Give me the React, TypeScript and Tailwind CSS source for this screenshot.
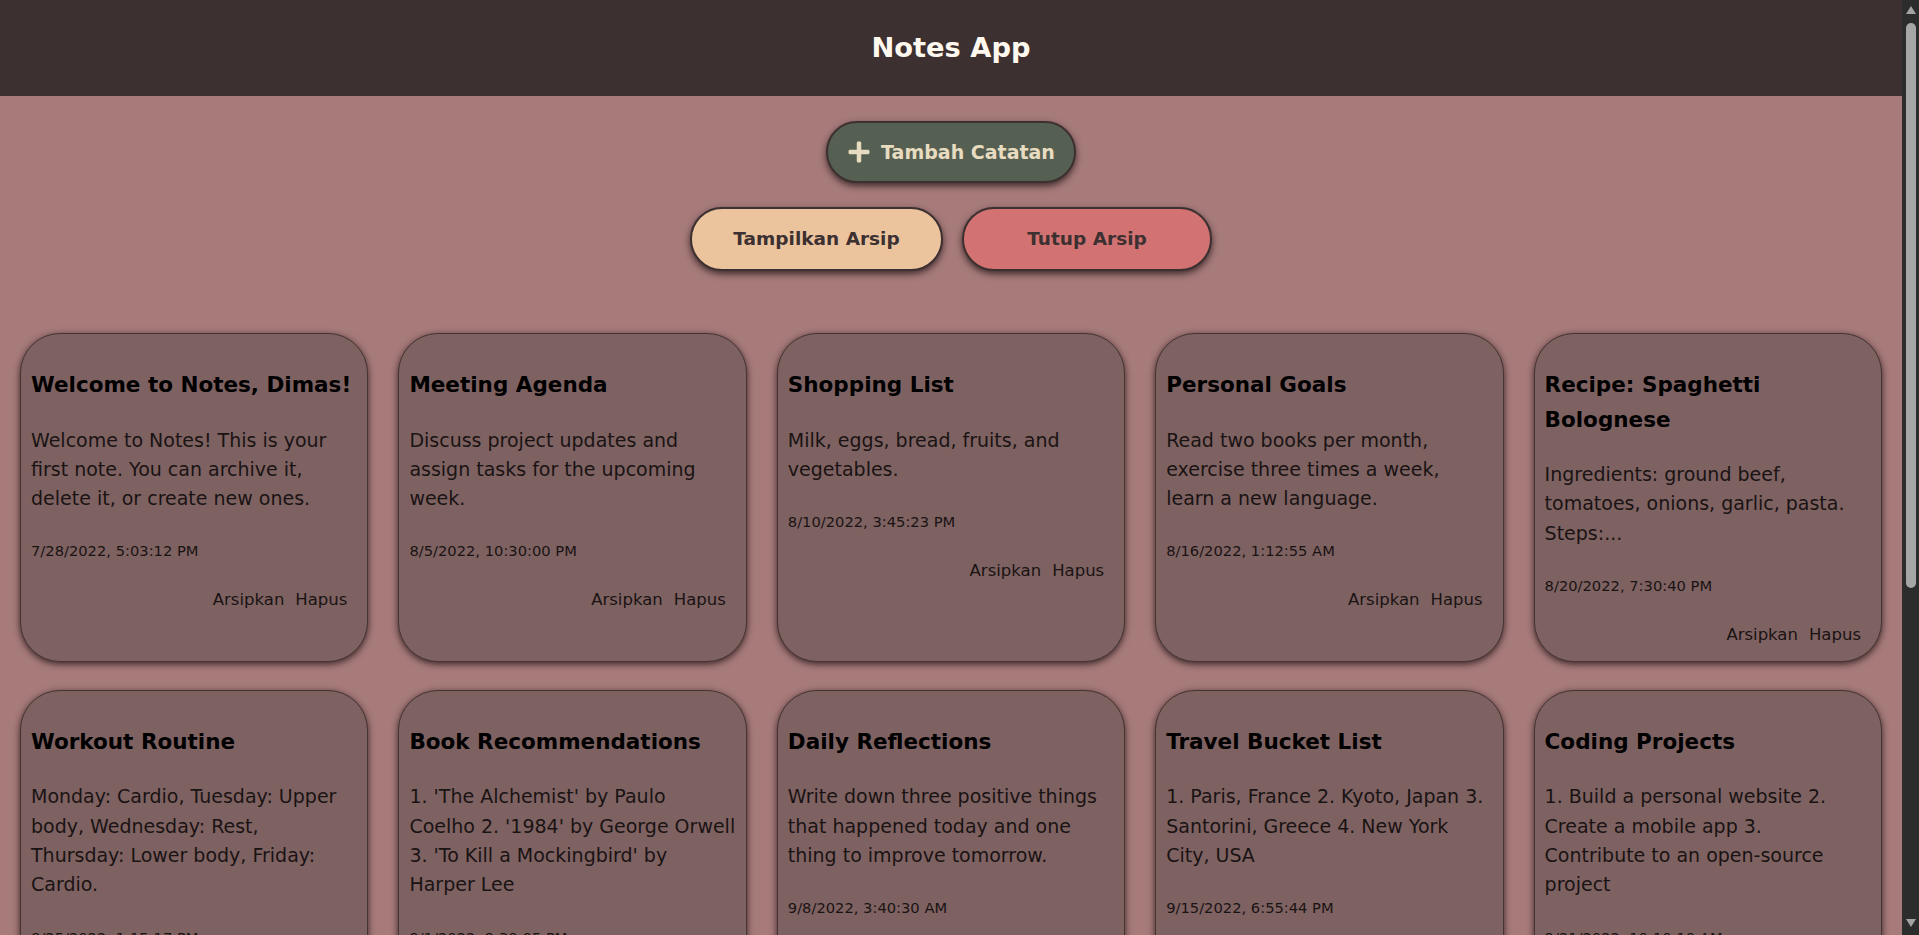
import { FaPlus } from "react-icons/fa";

interface Note {
  id: number;
  title: string;
  body: string;
  createdAt: string;
}

const NOTES: Note[] = [
  {
    id: 1,
    title: "Welcome to Notes, Dimas!",
    body: "Welcome to Notes! This is your first note. You can archive it, delete it, or create new ones.",
    createdAt: "7/28/2022, 5:03:12 PM",
  },
  {
    id: 2,
    title: "Meeting Agenda",
    body: "Discuss project updates and assign tasks for the upcoming week.",
    createdAt: "8/5/2022, 10:30:00 PM",
  },
  {
    id: 3,
    title: "Shopping List",
    body: "Milk, eggs, bread, fruits, and vegetables.",
    createdAt: "8/10/2022, 3:45:23 PM",
  },
  {
    id: 4,
    title: "Personal Goals",
    body: "Read two books per month, exercise three times a week, learn a new language.",
    createdAt: "8/16/2022, 1:12:55 AM",
  },
  {
    id: 5,
    title: "Recipe: Spaghetti Bolognese",
    body: "Ingredients: ground beef, tomatoes, onions, garlic, pasta. Steps:...",
    createdAt: "8/20/2022, 7:30:40 PM",
  },
  {
    id: 6,
    title: "Workout Routine",
    body: "Monday: Cardio, Tuesday: Upper body, Wednesday: Rest, Thursday: Lower body, Friday: Cardio.",
    createdAt: "8/25/2022, 1:15:17 PM",
  },
  {
    id: 7,
    title: "Book Recommendations",
    body: "1. 'The Alchemist' by Paulo Coelho 2. '1984' by George Orwell 3. 'To Kill a Mockingbird' by Harper Lee",
    createdAt: "9/1/2022, 9:30:05 PM",
  },
  {
    id: 8,
    title: "Daily Reflections",
    body: "Write down three positive things that happened today and one thing to improve tomorrow.",
    createdAt: "9/8/2022, 3:40:30 AM",
  },
  {
    id: 9,
    title: "Travel Bucket List",
    body: "1. Paris, France 2. Kyoto, Japan 3. Santorini, Greece 4. New York City, USA",
    createdAt: "9/15/2022, 6:55:44 PM",
  },
  {
    id: 10,
    title: "Coding Projects",
    body: "1. Build a personal website 2. Create a mobile app 3. Contribute\u00a0to an open-source project",
    createdAt: "9/21/2022, 10:10:10 AM",
  },
  {
    id: 11,
    title: "Project Deadline",
    body: "Complete project tasks by the deadline on October 1st.",
    createdAt: "9/28/2022, 2:00:00 PM",
  },
  {
    id: 12,
    title: "Health Checkup",
    body: "Schedule a routine health checkup with the doctor.",
    createdAt: "10/5/2022, 9:15:30 AM",
  },
  {
    id: 13,
    title: "Financial Goals",
    body: "Create a monthly budget and save money for a vacation.",
    createdAt: "10/12/2022, 6:40:10 PM",
  },
  {
    id: 14,
    title: "Holiday Plans",
    body: "Plan a family trip and book the tickets early.",
    createdAt: "10/20/2022, 11:25:45 AM",
  },
  {
    id: 15,
    title: "Learning Resources",
    body: "Collect online courses and tutorials for learning React.",
    createdAt: "10/27/2022, 4:50:05 PM",
  },
];

function NoteCard({ note }: { note: Note }) {
  return (
    <div className="rounded-[40px] border border-[#463434] bg-[#7e6262] px-[10px] pb-[14px] pt-[34px] shadow-[0_2px_7px_rgba(40,26,26,0.9)]">
      <h3 className="text-[21.5px] font-bold leading-[34.5px] text-black">
        {note.title}
      </h3>
      <p className="mt-[23px] text-[19px] leading-[29.3px] text-[#1a1313]">
        {note.body}
      </p>
      <p className="mt-[26px] text-[14.7px] leading-[24px] text-[#1a1313]">
        {note.createdAt}
      </p>
      <div className="mt-[25px] flex justify-end gap-[11px] pr-[10px] text-[16.5px] leading-[24px] text-[#1a1313]">
        <button type="button">Arsipkan</button>
        <button type="button">Hapus</button>
      </div>
    </div>
  );
}

// Dark page scrollbar as it shows in the browser window.
function ScrollRail() {
  return (
    <div className="flex w-[17px] shrink-0 flex-col items-center bg-[#2c2c2c]">
      <span className="mt-[6px] h-0 w-0 border-x-[5px] border-b-[8px] border-x-transparent border-b-[#a3a3a3]" />
      <span className="mt-[9px] h-[565px] w-[10px] rounded-full bg-[#a6a6a6]" />
      <span className="flex-1" />
      <span className="mb-[8px] h-0 w-0 border-x-[5px] border-t-[8px] border-x-transparent border-t-[#a3a3a3]" />
    </div>
  );
}

export default function App() {
  return (
    <div className="flex h-screen bg-[#a87b7b] font-['DejaVu_Sans',sans-serif]">
      <div className="flex-1 overflow-y-auto [scrollbar-width:none]">
        {/* Top bar */}
        <header className="flex h-[96px] items-center justify-center bg-[#3c3031]">
          <h1 className="text-[27.3px] font-bold text-[#fff8ee]">Notes App</h1>
        </header>

        <main className="px-5 pb-10 pt-[25px]">
          <div className="flex flex-col items-center gap-[24px]">
            <button
              type="button"
              className="flex h-[62px] w-[250px] items-center justify-center gap-[10px] rounded-full border-2 border-[#3c3031] bg-[#566052] text-[19px] font-bold text-[#e8dcc0] shadow-[0_3px_7px_rgba(50,34,34,0.9)]"
            >
              <FaPlus className="h-[24px] w-[24px]" />
              Tambah Catatan
            </button>

            <div className="flex gap-[19px]">
              <button
                type="button"
                className="h-[64px] w-[253px] rounded-full border-2 border-[#3c3031] bg-[#ebc49e] text-[18.5px] font-bold text-[#3c3031] shadow-[0_3px_7px_rgba(50,34,34,0.9)]"
              >
                Tampilkan Arsip
              </button>
              <button
                type="button"
                className="h-[64px] w-[250px] rounded-full border-2 border-[#3c3031] bg-[#d27272] text-[18.5px] font-bold text-[#3c3031] shadow-[0_3px_7px_rgba(50,34,34,0.9)]"
              >
                Tutup Arsip
              </button>
            </div>
          </div>

          {/* Notes grid */}
          <div className="mt-[62px] grid grid-cols-5 gap-x-[30px] gap-y-[28px]">
            {NOTES.map((n) => (
              <NoteCard key={n.id} note={n} />
            ))}
          </div>
        </main>
      </div>
      <ScrollRail />
    </div>
  );
}
